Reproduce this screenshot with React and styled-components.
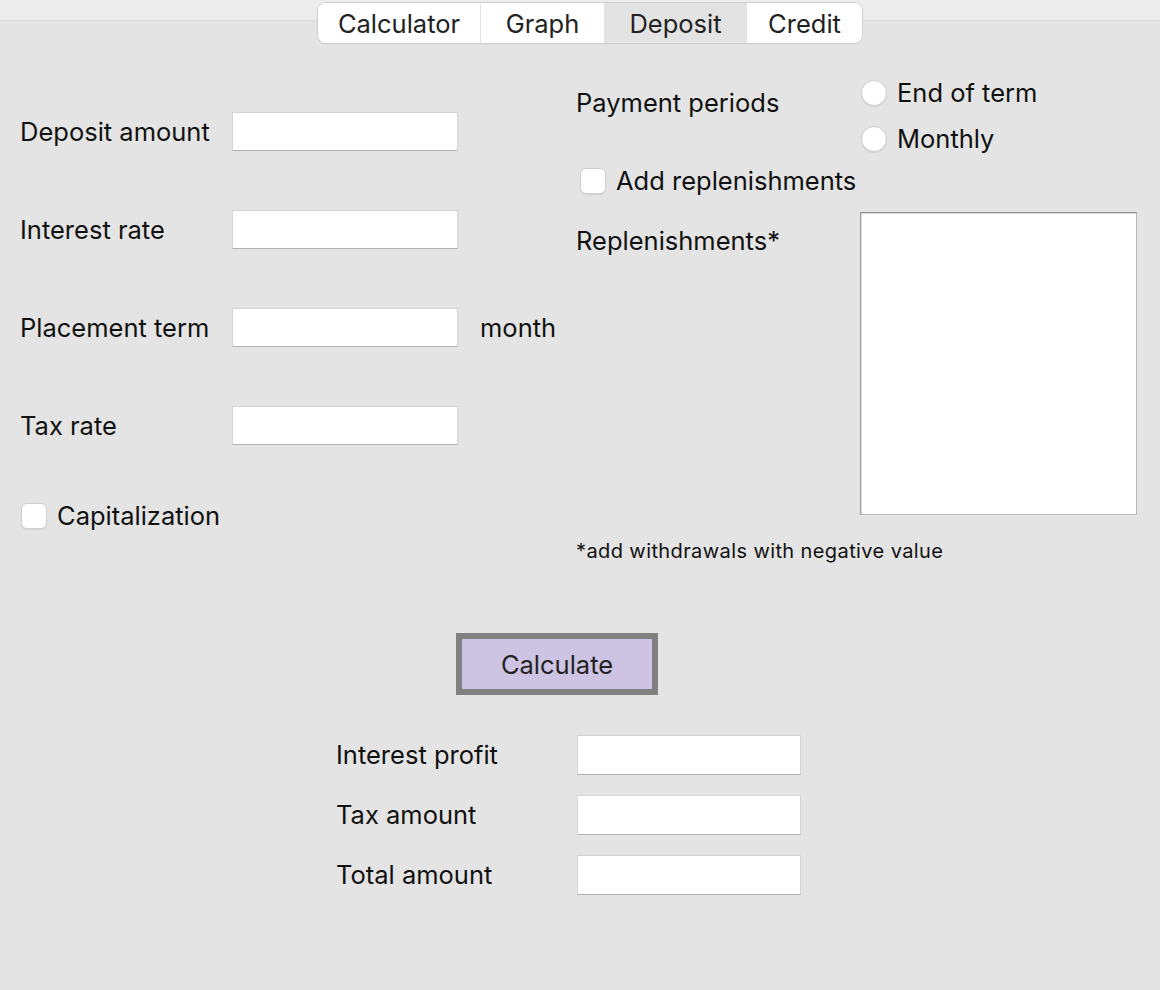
import React, { useState } from 'react';
import styled, { createGlobalStyle } from 'styled-components';

const GlobalStyle = createGlobalStyle`
  html, body {
    margin: 0;
    padding: 0;
    background: #e4e4e4;
  }
  body {
    font-family: Inter, "Liberation Sans", sans-serif;
    color: #111;
  }
`;

const Window = styled.div`
  width: 1160px;
  height: 990px;
  background: #e4e4e4;
  overflow: hidden;
`;

const TopBar = styled.div`
  display: flex;
  justify-content: center;
  padding: 3px 0 0 20px;
  background: linear-gradient(to bottom, #ececec 0 20px, #d9d9d9 20px 21px, #e4e4e4 21px);
`;

const Segmented = styled.div`
  display: flex;
  height: 40px;
  border-radius: 8px;
  background: #fff;
  box-shadow: 0 0 0 1px #cfcfcf, 0 1px 1px rgba(0, 0, 0, 0.18);
  overflow: hidden;
`;

const Segment = styled.button`
  width: ${({ $w }) => $w}px;
  border: none;
  border-left: ${({ $first }) => ($first ? 'none' : '1px solid #e2e2e2')};
  background: ${({ $active }) => ($active ? '#e3e3e3' : '#fff')};
  font-family: inherit;
  font-size: 25.5px;
  color: #222;
  padding: 0;
  cursor: pointer;
`;

const Body = styled.div`
  display: flex;
  padding: 35px 0 0 20px;
`;

const LeftCol = styled.div`
  width: 556px;
  display: flex;
  flex-direction: column;
`;

const FieldGrid = styled.div`
  display: grid;
  grid-template-columns: 212px 226px auto;
  row-gap: 59px;
  align-items: center;
  margin-top: 34px;
`;

const Label = styled.span`
  font-size: 25.5px;
  line-height: 30px;
  color: #111;
  white-space: nowrap;
`;

const Unit = styled(Label)`
  margin-left: 22px;
`;

const TextInput = styled.input`
  box-sizing: border-box;
  width: ${({ $w }) => $w || 226}px;
  height: ${({ $h }) => $h || 39}px;
  border: 1px solid #d4d4d4;
  border-bottom: 1px solid #b3b3b3;
  background: #fff;
  font-size: 20px;
  outline: none;
  padding: 0 6px;
`;

const CheckRow = styled.label`
  display: flex;
  align-items: center;
  gap: 10px;
  margin: ${({ $m }) => $m || 0};
  cursor: pointer;
`;

const Box = styled.span`
  box-sizing: border-box;
  width: 26px;
  height: 26px;
  border-radius: ${({ $round }) => ($round ? '50%' : '6px')};
  background: #fff;
  border: 1px solid #d0d0d0;
  box-shadow: 0 1px 1px rgba(0, 0, 0, 0.08);
  flex-shrink: 0;
  display: flex;
  align-items: center;
  justify-content: center;
`;

const Dot = styled.span`
  width: 10px;
  height: 10px;
  border-radius: 50%;
  background: #3a7bf6;
`;

const RightCol = styled.div`
  display: flex;
  flex-direction: column;
`;

const PaymentRow = styled.div`
  display: flex;
  align-items: flex-start;
`;

const PaymentLabel = styled(Label)`
  width: 285px;
  margin-top: 10px;
`;

const RadioGroup = styled.div`
  display: flex;
  flex-direction: column;
  gap: 16px;
`;

const ReplRow = styled.div`
  display: flex;
  margin-top: 16px;
`;

const ReplLabel = styled(Label)`
  width: 284px;
  margin-top: 14px;
`;

const TextArea = styled.textarea`
  box-sizing: border-box;
  width: 277px;
  height: 303px;
  border: 1px solid #b9b9b9;
  border-top-color: #8e8e8e;
  border-left-color: #9e9e9e;
  box-shadow: inset 1px 1px 0 #d8d8d8;
  background: #fff;
  resize: none;
  outline: none;
`;

const Note = styled.span`
  font-size: 20px;
  line-height: 24px;
  color: #111;
  margin-top: 24px;
  letter-spacing: 0.4px;
`;

const CalcWrap = styled.div`
  display: flex;
  justify-content: center;
  margin-top: 70px;
  padding-right: 46px;
`;

const CalcButton = styled.button`
  box-sizing: border-box;
  width: 202px;
  height: 62px;
  border: 6px solid #808080;
  background: #cdc3e2;
  font-family: inherit;
  font-size: 25.5px;
  color: #222;
  cursor: pointer;
`;

const Results = styled.div`
  display: grid;
  grid-template-columns: 241px 224px;
  row-gap: 20px;
  align-items: center;
  margin: 40px 0 0 336px;
`;

const Checkbox = ({ label, m }) => {
  const [on, setOn] = useState(false);
  return (
    <CheckRow $m={m} onClick={() => setOn(v => !v)}>
      <Box style={on ? { background: '#3a7bf6', borderColor: '#3a7bf6' } : undefined} />
      <Label>{label}</Label>
    </CheckRow>
  );
};

const Radio = ({ label, checked, onPick }) => (
  <CheckRow onClick={onPick}>
    <Box $round>{checked && <Dot />}</Box>
    <Label>{label}</Label>
  </CheckRow>
);

const tabs = [
  { name: 'Calculator', w: 162 },
  { name: 'Graph', w: 124 },
  { name: 'Deposit', w: 142 },
  { name: 'Credit', w: 116 },
];

const fields = [
  { label: 'Deposit amount' },
  { label: 'Interest rate' },
  { label: 'Placement term', unit: 'month' },
  { label: 'Tax rate' },
];

const results = ['Interest profit', 'Tax amount', 'Total amount'];

const App = () => {
  const [tab, setTab] = useState('Deposit');
  const [period, setPeriod] = useState(null);

  return (
    <Window>
      <GlobalStyle />
      <TopBar>
        <Segmented>
          {tabs.map((t, i) => (
            <Segment
              key={t.name}
              $w={t.w}
              $first={i === 0}
              $active={tab === t.name}
              onClick={() => setTab(t.name)}>
              {t.name}
            </Segment>
          ))}
        </Segmented>
      </TopBar>
      <Body>
        <LeftCol>
          <FieldGrid>
            {fields.map(f => (
              <React.Fragment key={f.label}>
                <Label>{f.label}</Label>
                <TextInput />
                {f.unit ? <Unit>{f.unit}</Unit> : <span />}
              </React.Fragment>
            ))}
          </FieldGrid>
          <Checkbox label='Capitalization' m='56px 0 0 1px' />
        </LeftCol>
        <RightCol>
          <PaymentRow>
            <PaymentLabel>Payment periods</PaymentLabel>
            <RadioGroup>
              <Radio label='End of term' checked={period === 'end'} onPick={() => setPeriod('end')} />
              <Radio label='Monthly' checked={period === 'month'} onPick={() => setPeriod('month')} />
            </RadioGroup>
          </PaymentRow>
          <Checkbox label='Add replenishments' m='12px 0 0 4px' />
          <ReplRow>
            <ReplLabel>Replenishments*</ReplLabel>
            <TextArea />
          </ReplRow>
          <Note>*add withdrawals with negative value</Note>
        </RightCol>
      </Body>
      <CalcWrap>
        <CalcButton>Calculate</CalcButton>
      </CalcWrap>
      <Results>
        {results.map(r => (
          <React.Fragment key={r}>
            <Label>{r}</Label>
            <TextInput $w={224} $h={40} />
          </React.Fragment>
        ))}
      </Results>
    </Window>
  );
};

export default App;
